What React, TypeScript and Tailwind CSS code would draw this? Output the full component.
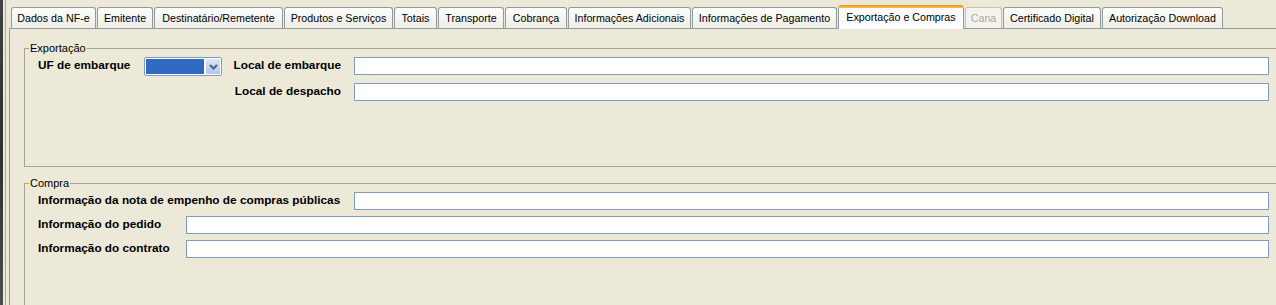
import React from 'react';

const tabs = [
  { label: 'Dados da NF-e', w: 'w-[85px]' },
  { label: 'Emitente', w: 'w-[56px]' },
  { label: 'Destinatário/Remetente', w: 'w-[129px]' },
  { label: 'Produtos e Serviços', w: 'w-[109px]' },
  { label: 'Totais', w: 'w-[43px]' },
  { label: 'Transporte', w: 'w-[66px]' },
  { label: 'Cobrança', w: 'w-[62px]' },
  { label: 'Informações Adicionais', w: 'w-[123px]' },
  { label: 'Informações de Pagamento', w: 'w-[145px]' },
  { label: 'Exportação e Compras', w: 'w-[126px]', selected: true },
  { label: 'Cana', w: 'w-[37px]', disabled: true },
  { label: 'Certificado Digital', w: 'w-[98px]' },
  { label: 'Autorização Download', w: 'w-[121px]' },
];

const Field = ({ className = '' }: { className?: string }) => (
  <div className={`h-[18px] border border-[#7f9db9] bg-white ${className}`}></div>
);

const Label = ({ children, className = '' }: { children: React.ReactNode; className?: string }) => (
  <span className={`text-[11.8px] font-bold leading-none text-black whitespace-nowrap ${className}`}>{children}</span>
);

const GroupBox = ({ title, className = '', children }: { title: string; className?: string; children: React.ReactNode }) => (
  <div className={`relative border-l border-t border-[#a7a597] ${className}`}>
    {/* legend sits over the top border */}
    <span className="absolute -top-[7px] left-[4px] bg-[#ece9d8] px-px text-[11px] leading-[13px] text-black">
      {title}
    </span>
    {children}
  </div>
);

const App: React.FC = () => {
  return (
    <div className="flex h-[305px] w-[1276px] overflow-hidden bg-[#ece9d8] font-['Liberation_Sans',Arial,sans-serif]">
      {/* window frame on the left */}
      <div className="w-[3px] bg-gradient-to-b from-[#3d4342] via-[#2c302f] to-[#4a4f4e]"></div>
      <div className="w-[2px]"></div>
      <div className="w-px bg-[#aca899]"></div>
      <div className="w-[3px]"></div>

      <div className="flex flex-1 flex-col">
        {/* Tab strip */}
        <div className="flex h-[28px] items-end gap-px pl-[2px]">
          {tabs.map((tab) =>
            tab.selected ? (
              <div
                key={tab.label}
                className={`relative z-10 -mb-px flex h-[24px] flex-col ${tab.w}`}
              >
                <div className="h-[3px] rounded-t-[3px] bg-gradient-to-b from-[#e68b2c] to-[#ffc73c]"></div>
                <div className="flex flex-1 items-center justify-center border-x border-[#919b9c] bg-[#fcfcfe] pb-[2px] text-[10.7px] leading-none text-black">
                  {tab.label}
                </div>
              </div>
            ) : (
              <div
                key={tab.label}
                className={`flex h-[21px] items-center justify-center rounded-t-[3px] border border-b-0 text-[10.7px] leading-none ${tab.w} ${
                  tab.disabled
                    ? 'border-[#c5c2b2] bg-[#f4f3ee] text-[#aca899]'
                    : 'border-[#919b9c] bg-gradient-to-b from-[#fdfdfc] to-[#eeede7] text-black'
                }`}
              >
                {tab.label}
              </div>
            )
          )}
        </div>

        {/* Tab panel */}
        <div className="flex flex-1 flex-col border-l border-t border-[#919b9c] pl-[14px] pt-[19px]">
          <GroupBox title="Exportação" className="h-[119px] border-b pl-[13px] pr-[7px] pt-[8px]">
            <div className="grid grid-cols-[106px_78px_132px_1fr] grid-rows-[18px_18px] gap-y-[8px]">
              <div className="flex items-center">
                <Label>UF de embarque</Label>
              </div>
              <div className="flex h-[19px] rounded-[2px] border border-[#7f9db9] bg-white">
                <div className="m-px mr-0 flex-1 bg-[#316ac5]"></div>
                <div className="ml-px flex w-[16px] items-center justify-center rounded-[2px] border border-white bg-gradient-to-b from-[#dbe5fb] to-[#b3c6f2]">
                  <svg width="9" height="6" viewBox="0 0 9 6">
                    <polyline points="1,1 4.5,4.5 8,1" fill="none" stroke="#4d6185" strokeWidth="2" />
                  </svg>
                </div>
              </div>
              <div className="flex items-center justify-end pr-[13px]">
                <Label>Local de embarque</Label>
              </div>
              <Field />
              <div></div>
              <div></div>
              <div className="flex items-center justify-end pr-[13px]">
                <Label>Local de despacho</Label>
              </div>
              <Field />
            </div>
          </GroupBox>

          <GroupBox title="Compra" className="mt-[16px] flex-1 pl-[13px] pr-[7px] pt-[8px]">
            <div className="flex flex-col gap-[6px]">
              <div className="flex h-[18px] items-center">
                <div className="flex w-[316px] items-center">
                  <Label>Informação da nota de empenho de compras públicas</Label>
                </div>
                <Field className="flex-1" />
              </div>
              <div className="flex h-[18px] items-center">
                <div className="flex w-[148px] items-center">
                  <Label>Informação do pedido</Label>
                </div>
                <Field className="flex-1" />
              </div>
              <div className="flex h-[18px] items-center">
                <div className="flex w-[148px] items-center">
                  <Label>Informação do contrato</Label>
                </div>
                <Field className="flex-1" />
              </div>
            </div>
          </GroupBox>
        </div>
      </div>
    </div>
  );
};

export default App;
